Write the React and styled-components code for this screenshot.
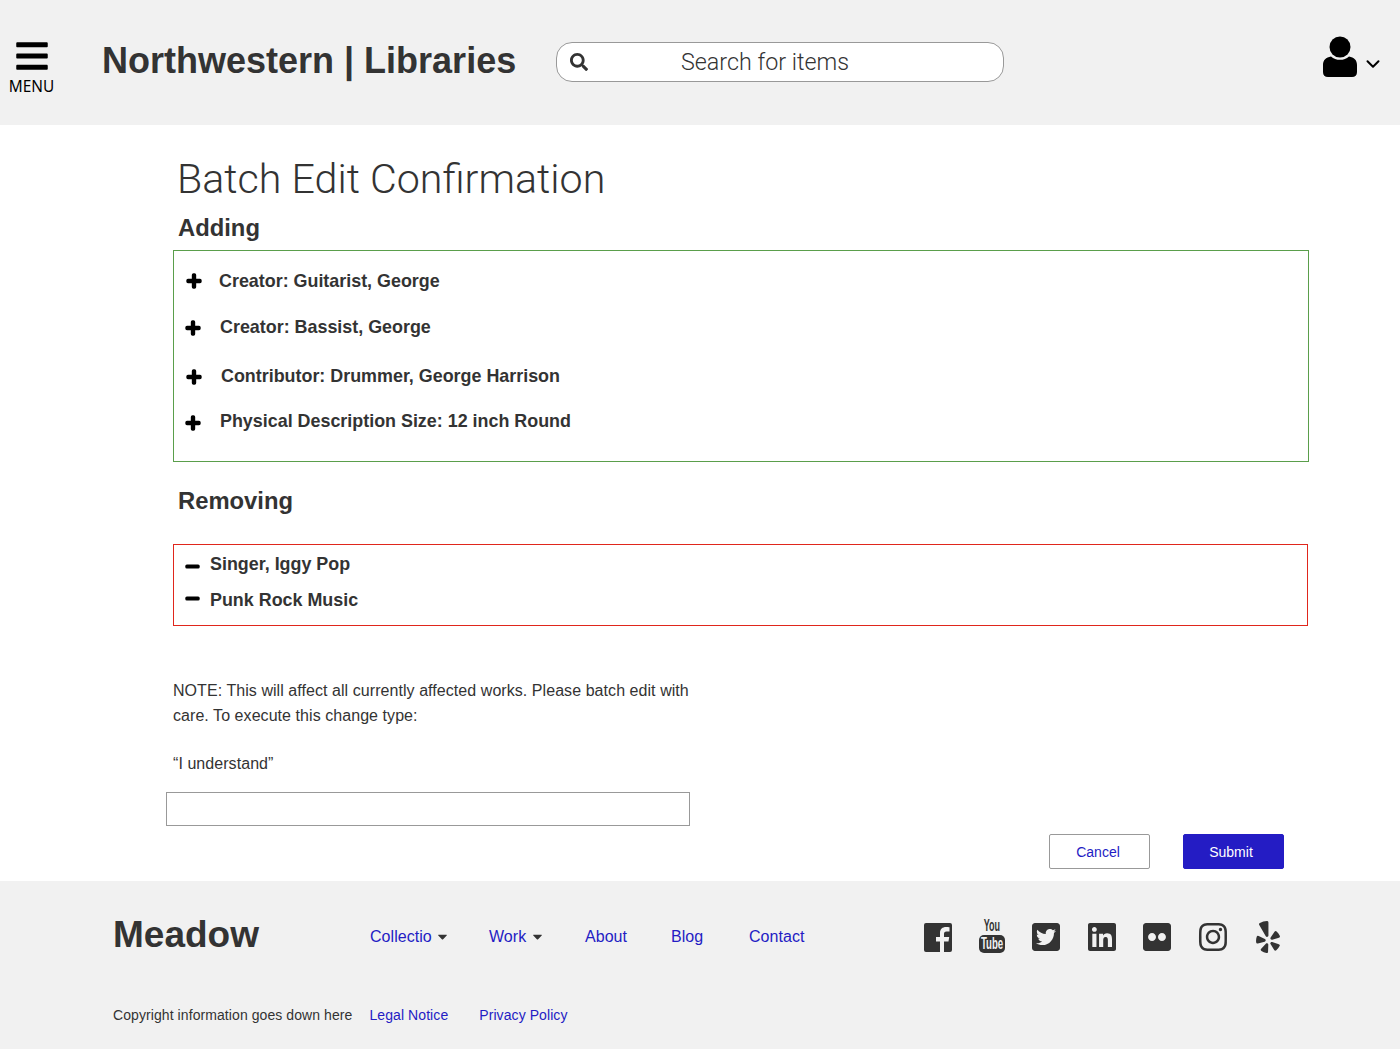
import React from 'react';
import styled, { createGlobalStyle } from 'styled-components';
import { FaBars, FaSearch, FaPlus, FaMinus, FaTwitterSquare, FaLinkedin, FaFlickr, FaInstagram, FaYelp, FaCaretDown } from 'react-icons/fa';
import { ChevronDown } from 'lucide-react';

const GlobalStyle = createGlobalStyle`
  html, body {
    margin: 0;
    padding: 0;
    background: #fff;
    font-family: 'Liberation Sans', Arial, sans-serif;
    color: #333;
  }
  * { box-sizing: border-box; }
`;

const Page = styled.div`
  width: 1400px;
  height: 1049px;
  display: flex;
  flex-direction: column;
  overflow: hidden;
`;

const Header = styled.header`
  height: 125px;
  flex: none;
  background: #f1f1f1;
  display: flex;
  align-items: flex-start;
  padding-top: 36px;
`;

const MenuButton = styled.div`
  width: 63px;
  margin-top: 2px;
  display: flex;
  flex-direction: column;
  align-items: center;
  color: #000;
`;

const MenuLabel = styled.span`
  font-family: 'Noto Sans', sans-serif;
  font-size: 15.4px;
  line-height: 18px;
  margin-top: 4px;
`;

const Brand = styled.div`
  margin: 2px 0 0 39px;
  width: 454px;
  font-size: 36px;
  line-height: 46px;
  font-weight: 700;
  color: #333;
  white-space: nowrap;
`;

const SearchBar = styled.div`
  width: 448px;
  height: 40px;
  margin-top: 6px;
  background: #fff;
  border: 1px solid #999;
  border-radius: 16px;
  display: flex;
  align-items: center;
  padding-left: 13px;
  color: #333;
`;

const SearchText = styled.span`
  margin: 0 0 1px 93px;
  font-family: 'Roboto', sans-serif;
  font-weight: 300;
  font-size: 23.3px;
  color: #333;
`;

const Account = styled.div`
  margin-left: auto;
  margin-right: 16px;
  display: flex;
  align-items: center;
  gap: 4px;
  color: #000;
`;

const AccountChevron = styled(ChevronDown)`
  margin-top: 14px;
`;

const Main = styled.main`
  flex: 1;
  padding: 32px 0 0 173px;
`;

const Title = styled.h1`
  margin: 0 0 0 4px;
  font-family: 'Roboto', sans-serif;
  font-weight: 300;
  font-size: 41.2px;
  line-height: 44px;
  color: #333;
`;

const SectionTitle = styled.h2`
  margin: ${p => p.$margin};
  font-size: 23.8px;
  line-height: 28px;
  font-weight: 700;
  color: #333;
`;

const ChangeBox = styled.div`
  width: ${p => p.$width}px;
  height: ${p => p.$height}px;
  border: 1px solid ${p => p.$color};
  padding: ${p => p.$padding};
`;

const ChangeRow = styled.div`
  height: ${p => p.$height}px;
  display: flex;
  align-items: center;
  padding-left: ${p => p.$indent}px;
  gap: ${p => p.$gap}px;
  font-size: 17.9px;
  font-weight: 700;
  color: #333;
`;

const RowIcon = styled.span`
  display: flex;
  flex: none;
  color: #000;
  transform: translateY(${p => p.$shift}px);
  svg { stroke: currentColor; stroke-width: 44; stroke-linejoin: round; }
`;

const Note = styled.p`
  width: 530px;
  margin: ${p => p.$margin};
  font-size: 16px;
  line-height: 25px;
  letter-spacing: 0.06px;
  color: #333;
`;

const ConfirmInput = styled.input`
  display: block;
  width: 524px;
  height: 34px;
  margin: 16px 0 0 -7px;
  border: 1px solid #999;
  background: #fff;
`;

const Actions = styled.div`
  width: 1111px;
  margin-top: 8px;
  display: flex;
  justify-content: flex-end;
  gap: 33px;
`;

const ActionButton = styled.button`
  width: 101px;
  height: 35px;
  border-radius: 2px;
  border: 1px solid ${p => (p.$primary ? '#241cc4' : '#999')};
  background: ${p => (p.$primary ? '#241cc4' : '#fff')};
  color: ${p => (p.$primary ? '#fff' : '#241cc4')};
  font-family: 'Liberation Sans', Arial, sans-serif;
  font-size: 14px;
  padding: 0 ${p => (p.$primary ? 5 : 3)}px 0 0;
`;

const Footer = styled.footer`
  height: 168px;
  flex: none;
  background: #f1f1f1;
  padding: 32px 0 0 113px;
`;

const FooterTop = styled.div`
  display: flex;
  align-items: flex-start;
`;

const FooterBrand = styled.div`
  width: 257px;
  font-size: 37px;
  line-height: 44px;
  font-weight: 700;
  color: #333;
`;

const FooterNav = styled.nav`
  width: 552px;
  display: flex;
  padding-top: 14px;
`;

const NavLink = styled.a`
  width: ${p => p.$width}px;
  font-size: 16px;
  line-height: 20px;
  letter-spacing: 0.05px;
  color: #241cc4;
  white-space: nowrap;
  svg { color: #333; vertical-align: -2px; margin-left: -1px; }
`;

const Socials = styled.div`
  display: flex;
  align-items: center;
  padding-top: 8px;
  color: #333;
  gap: 23.5px;
`;

const FacebookBox = styled.svg`
  width: 28px;
  height: 29px;
  margin: 0 2px;
`;

const YouTube = styled.div`
  width: 29px;
  margin-top: 0;
  display: flex;
  flex-direction: column;
  align-items: center;
  font-family: 'Liberation Sans', Arial, sans-serif;
  font-weight: 700;
  color: #333;
`;

const You = styled.span`
  font-size: 12px;
  line-height: 14px;
  height: 14px;
  transform: scale(0.75, 1.4);
  transform-origin: center bottom;
`;

const Tube = styled.span`
  width: 26px;
  height: 18px;
  margin-top: 0;
  background: #333;
  color: #f1f1f1;
  border-radius: 5px;
  font-size: 13px;
  line-height: 18px;
  overflow: hidden;
  white-space: nowrap;
  display: flex;
  justify-content: center;
  span { display: inline-block; transform: scale(0.74, 1.3); }
`;

const FooterBottom = styled.div`
  margin-top: 48px;
  display: flex;
  font-size: 14px;
  line-height: 20px;
  letter-spacing: 0.08px;
  color: #333;
`;

const FooterLink = styled.a`
  margin-left: ${p => p.$offset}px;
  color: #241cc4;
`;

const UserIcon = () => (
  <svg width="36" height="42" viewBox="0 0 36 42" fill="currentColor">
    <circle cx="18" cy="11" r="10.5" />
    <path d="M9 20.5c2.500 2.500 5.500 3.300 9 3.300s6.500-.8 9-3.300c5 .8 8 3.600 8 8.500v7c0 3.200-1.800 5-5 5H6c-3.200 0-5-1.800-5-5v-7c0-4.900 3-7.700 8-8.500z" />
  </svg>
);

const FacebookIcon = () => (
  <FacebookBox viewBox="0 0 28 29" fill="currentColor">
    <path d="M0 2a2 2 0 0 1 2-2h24a2 2 0 0 1 2 2v25a2 2 0 0 1-2 2h-6V18.500h4.500l.7-4.500H20v-3c0-1.500.6-2.500 2.500-2.500h3V4.300C24.800 4.100 23.500 4 22 4c-3.500 0-6 2-6 6v4h-4v4.500h4V29H2a2 2 0 0 1-2-2z" />
  </FacebookBox>
);

const added = [
  { text: 'Creator: Guitarist, George', height: 46, indent: 12, gap: 17, shift: 0 },
  { text: 'Creator: Bassist, George', height: 46, indent: 11, gap: 19, shift: 1 },
  { text: 'Contributor: Drummer, George Harrison', height: 52, indent: 12, gap: 19, shift: 1 },
  { text: 'Physical Description Size: 12 inch Round', height: 39, indent: 11, gap: 19, shift: 1 },
];

const removed = [
  { text: 'Singer, Iggy Pop', height: 36, shift: 2 },
  { text: 'Punk Rock Music', height: 36, shift: -2 },
];

const socials = [FaTwitterSquare, FaLinkedin, FaFlickr, FaInstagram, FaYelp];

export default function App() {
  return (
    <Page>
      <GlobalStyle />
      <Header>
        <MenuButton>
          <FaBars size={36} />
          <MenuLabel>MENU</MenuLabel>
        </MenuButton>
        <Brand>Northwestern | Libraries</Brand>
        <SearchBar>
          <FaSearch size={18} />
          <SearchText>Search for items</SearchText>
        </SearchBar>
        <Account>
          <UserIcon />
          <AccountChevron size={22} strokeWidth={2.2} />
        </Account>
      </Header>
      <Main>
        <Title>Batch Edit Confirmation</Title>
        <SectionTitle $margin="13px 0 8px 5px">Adding</SectionTitle>
        <ChangeBox $width={1136} $height={212} $color="#5a9e4b" $padding="7px 0 0">
          {added.map(row => (
            <ChangeRow key={row.text} $height={row.height} $indent={row.indent} $gap={row.gap}>
              <RowIcon $shift={row.shift}><FaPlus size={16} /></RowIcon>
              {row.text}
            </ChangeRow>
          ))}
        </ChangeBox>
        <SectionTitle $margin="25px 0 29px 5px">Removing</SectionTitle>
        <ChangeBox $width={1135} $height={82} $color="#e0261c" $padding="1px 0 0">
          {removed.map(row => (
            <ChangeRow key={row.text} $height={row.height} $indent={11} $gap={10}>
              <RowIcon $shift={row.shift}><FaMinus size={15} /></RowIcon>
              {row.text}
            </ChangeRow>
          ))}
        </ChangeBox>
        <Note $margin="52px 0 0">
          NOTE: This will affect all currently affected works. Please batch edit with care. To execute this change type:
        </Note>
        <Note $margin="23px 0 0">“I understand”</Note>
        <ConfirmInput aria-label="Confirmation" />
        <Actions>
          <ActionButton>Cancel</ActionButton>
          <ActionButton $primary>Submit</ActionButton>
        </Actions>
      </Main>
      <Footer>
        <FooterTop>
          <FooterBrand>Meadow</FooterBrand>
          <FooterNav>
            <NavLink $width={119}>Collectio <FaCaretDown size={15} /></NavLink>
            <NavLink $width={96}>Work <FaCaretDown size={15} /></NavLink>
            <NavLink $width={86}>About</NavLink>
            <NavLink $width={78}>Blog</NavLink>
            <NavLink $width={100}>Contact</NavLink>
          </FooterNav>
          <Socials>
            <FacebookIcon />
            <YouTube>
              <You>You</You>
              <Tube><span>Tube</span></Tube>
            </YouTube>
            {socials.map((Icon, i) => <Icon key={i} size={32} />)}
          </Socials>
        </FooterTop>
        <FooterBottom>
          Copyright information goes down here
          <FooterLink $offset={17}>Legal Notice</FooterLink>
          <FooterLink $offset={31}>Privacy Policy</FooterLink>
        </FooterBottom>
      </Footer>
    </Page>
  );
}
